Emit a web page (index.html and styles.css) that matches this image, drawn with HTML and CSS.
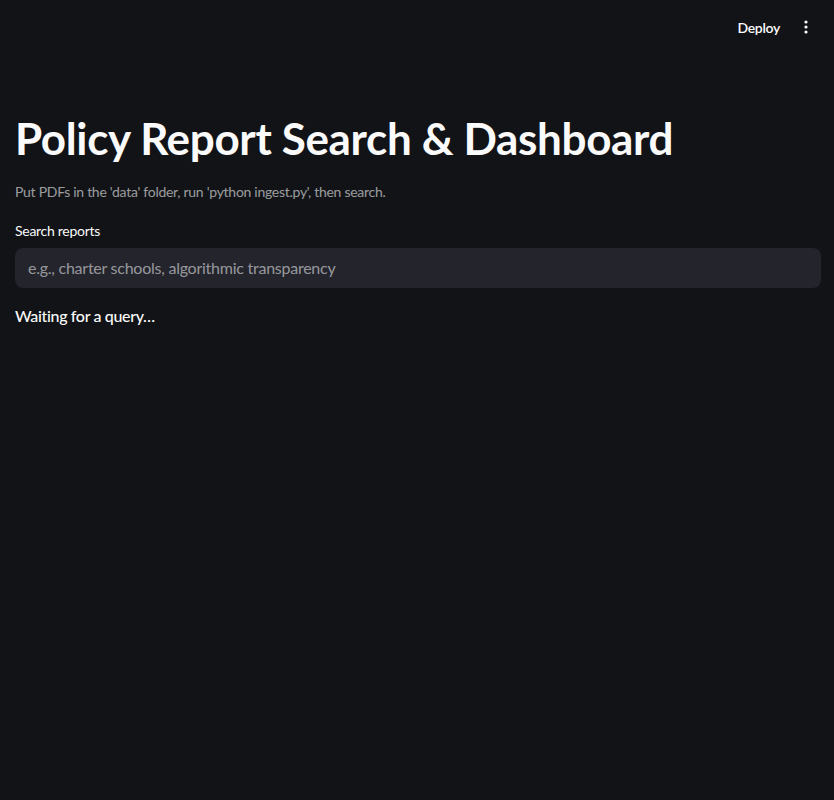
FILE: index.html
```html
<!DOCTYPE html>
<html lang="en">
<head>
<meta charset="utf-8">
<title>Policy Report Search & Dashboard</title>
<link rel="stylesheet" href="styles.css">
</head>
<body>
<header class="topbar">
  <button class="deploy">Deploy</button>
  <button class="menu" aria-label="Main menu">
    <svg width="16" height="16" viewBox="0 0 16 16"><circle cx="8" cy="3" r="1.6" fill="#fafafa"/><circle cx="8" cy="8" r="1.6" fill="#fafafa"/><circle cx="8" cy="13" r="1.6" fill="#fafafa"/></svg>
  </button>
</header>
<main class="main">
  <h1 class="title">Policy Report Search &amp; Dashboard</h1>
  <p class="caption">Put PDFs in the 'data' folder, run 'python ingest.py', then search.</p>
  <label class="label" for="q">Search reports</label>
  <div class="input-wrap"><input id="q" class="input" type="text" placeholder="e.g., charter schools, algorithmic transparency"></div>
  <p class="status">Waiting for a query…</p>
</main>
</body>
</html>
```

FILE: styles.css
```css
* { box-sizing: border-box; }
html, body { margin: 0; padding: 0; }
body {
  background: #111317;
  color: #fafafa;
  font-family: Lato, "Source Sans Pro", "Noto Sans", sans-serif;
  min-height: 800px;
}
.topbar {
  height: 54px;
  display: flex;
  align-items: center;
  justify-content: flex-end;
  padding: 0 14px 0 0;
  gap: 4px;
}
.deploy {
  background: transparent;
  border: none;
  color: #fafafa;
  font-family: inherit;
  font-size: 14px;
  font-weight: 600;
  letter-spacing: -0.3px;
  padding: 6px 8px;
}
.menu {
  background: transparent;
  border: none;
  padding: 4px;
  display: flex;
  align-items: center;
  justify-content: center;
  width: 28px;
  height: 28px;
}
.main {
  padding: 58px 13px 0 15px;
}
.title {
  margin: 0;
  font-size: 44px;
  font-weight: 700;
  line-height: 1.2;
  letter-spacing: -0.35px;
}
.caption {
  margin: 18px 0 0;
  font-size: 14px;
  letter-spacing: -0.28px;
  color: rgba(250, 250, 250, 0.6);
}
.label {
  display: block;
  margin-top: 22px;
  font-size: 14px;
  letter-spacing: -0.28px;
  color: #fafafa;
}
.input-wrap { margin-top: 9px; }
.input {
  width: 100%;
  height: 40px;
  border: none;
  border-radius: 8px;
  background: #23242c;
  color: #fafafa;
  padding: 0 13px;
  font-family: inherit;
  font-size: 16px;
  letter-spacing: -0.25px;
  outline: none;
}
.input::placeholder { color: rgba(250, 250, 250, 0.55); }
.status {
  margin: 18px 0 0;
  font-size: 16px;
  font-weight: 500;
  letter-spacing: -0.35px;
}
```
